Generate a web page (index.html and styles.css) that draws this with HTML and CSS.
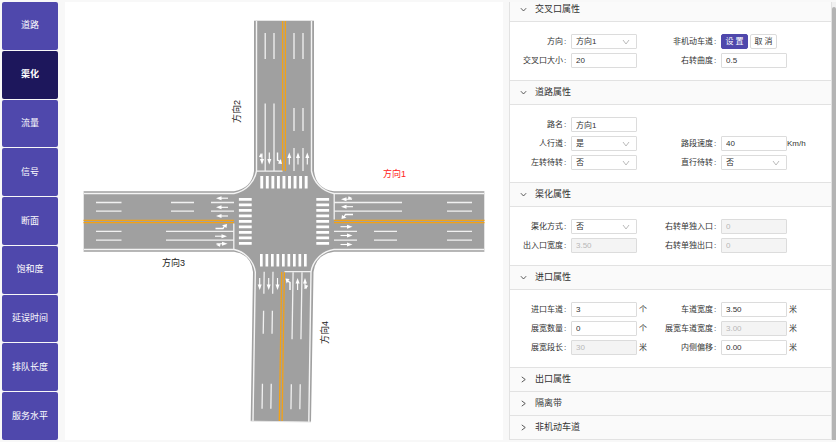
FILE: index.html
```html
<!DOCTYPE html>
<html lang="zh-CN">
<head>
<meta charset="utf-8">
<title>交叉口渠化</title>
<link rel="stylesheet" href="styles.css">
</head>
<body>
<nav class="nav">
  <button class="nav-item">道路</button>
  <button class="nav-item active">渠化</button>
  <button class="nav-item">流量</button>
  <button class="nav-item">信号</button>
  <button class="nav-item">断面</button>
  <button class="nav-item">饱和度</button>
  <button class="nav-item">延误时间</button>
  <button class="nav-item">排队长度</button>
  <button class="nav-item">服务水平</button>
</nav>

<main class="canvas">
<svg class="map" viewBox="65 2 438 438">
  <defs>
    <g id="ahead"><path d="M-6 0H2" stroke="#fff" stroke-width="1.1"/><path d="M6 0L0.5 -2V2Z" fill="#fff"/></g>
    <g id="turn"><path d="M-6 1.500H1.500L3 -1" fill="none" stroke="#fff" stroke-width="1.400"/><path d="M5.500 -3L0.500 -1.800L5 1Z" fill="#fff"/></g>
    <g id="fork"><path d="M-5 0H2M-4 0L-2 2.2" fill="none" stroke="#fff" stroke-width="1.1"/><path d="M6 0L0.5 -2V2Z" fill="#fff"/><path d="M-5.5 1L-1.5 3L-1 0Z" fill="#fff"/></g>
  </defs>

  <!-- asphalt -->
  <g fill="#a0a0a0">
    <path d="M254 20H314V171Q316 189 334 191.300H484.500V251.700H334Q316 254 313.500 272L311 422L250.700 421L253 272Q251 254 234 251.700H83.500V191.300H234Q252 188 254 171Z"/>
  </g>

  <!-- kerb lines -->
  <g fill="none" stroke="#f4f4f4" stroke-width="1.400">
    <path d="M256.500 20V171A28 28 0 0 1 234 193.500H83.500"/>
    <path d="M311.500 20V171A28 28 0 0 0 334 193.500H484.500"/>
    <path d="M83.500 249.500H234A27 27 0 0 1 255.300 272L253 421"/>
    <path d="M484.500 249.500H334A27 27 0 0 0 311 272L308.800 422"/>
  </g>
  <g fill="none" stroke="#e4e4e4" stroke-width="1">
    <path d="M254 20.500H314M83.500 191V252M484.500 191V252M250.700 421.200L311 422"/>
  </g>

  <!-- centre lines -->
  <g fill="none" stroke="#f3a216" stroke-width="1.300">
    <path d="M282.600 21V171M285.400 21V171"/>
    <path d="M83.500 220.400H234M83.500 222.700H234M334 220.400H484.500M334 222.700H484.500"/>
    <path d="M281.700 272L279.300 421M284.400 272L282.100 421"/>
  </g>

  <!-- lane lines -->
  <g fill="none" stroke="#f1f1f1" stroke-width="1.300">
    <path d="M265.200 33V59M274 33V59M294 33V59M303 33V59M265.200 103.500V171M274 103.500V171M294 108V131M303 108V131M294 148V171M303 148V171"/>
    <path d="M96 202.500H121.500M96 211.200H121.500M171 202.500H194M171 211.200H194M211 202.500H234M211 211.200H234M96 231.300H121.500M96 240.200H121.500M166 231.300H234M166 240.200H234"/>
    <path d="M334 202.500H402M334 211.200H402M447 202.500H472M447 211.200H472M334 231.300H357M334 240.200H357M374 231.300H397M374 240.200H397M447 231.300H472M447 240.200H472"/>
    <g transform="rotate(0.900 283 272)">
      <path d="M264.200 272V294M273 272V294M264.200 311V334M273 311V334M264.200 384V409M273 384V409M293.100 272V339M302 272V339M293.100 384V409M302 384V409"/>
    </g>
    <path d="M256.500 171.200H282.500M334.200 193.500V219.500M233.800 223.500V249.400M284.500 271.700H311"/>
  </g>

  <!-- crosswalks -->
  <g fill="none" stroke="#fff">
    <path d="M260.300 182.300H308" stroke-width="12.600" stroke-dasharray="2.900 2.650"/>
    <path d="M260 260.300H307.500" stroke-width="12.600" stroke-dasharray="2.700 2.800"/>
    <path d="M245.300 198V245" stroke-width="12.800" stroke-dasharray="2.700 2.800"/>
    <path d="M322.700 198V245" stroke-width="12.800" stroke-dasharray="2.700 2.800"/>
  </g>

  <!-- lane arrows -->
  <use href="#fork" transform="translate(262 158.500) rotate(90)"/>
  <use href="#ahead" transform="translate(269.300 158.500) rotate(90)"/>
  <use href="#turn" transform="translate(279 158.500) scale(-1 1) rotate(90) scale(1 -1)"/>
  <use href="#ahead" transform="translate(289.300 158.500) rotate(-90)"/>
  <use href="#ahead" transform="translate(298 158.500) rotate(-90)"/>
  <use href="#ahead" transform="translate(307.300 158.500) rotate(-90)"/>
  <use href="#ahead" transform="translate(222 198.200) rotate(180)"/>
  <use href="#ahead" transform="translate(222 207.300) rotate(180)"/>
  <use href="#ahead" transform="translate(222 216) rotate(180)"/>
  <use href="#turn" transform="translate(221.500 227)"/>
  <use href="#ahead" transform="translate(221 236.200)"/>
  <use href="#fork" transform="translate(221.500 243.700)"/>
  <use href="#fork" transform="translate(347 199.300) rotate(180)"/>
  <use href="#ahead" transform="translate(347 206.700) rotate(180)"/>
  <use href="#turn" transform="translate(347 216) rotate(180)"/>
  <use href="#ahead" transform="translate(346.500 226.700)"/>
  <use href="#ahead" transform="translate(346.500 235.500)"/>
  <use href="#ahead" transform="translate(346.500 244.500)"/>
  <use href="#ahead" transform="translate(259.700 284) rotate(90)"/>
  <use href="#ahead" transform="translate(268.700 284) rotate(90)"/>
  <use href="#ahead" transform="translate(277.500 284) rotate(90)"/>
  <use href="#turn" transform="translate(288.500 284) rotate(-90)"/>
  <use href="#ahead" transform="translate(297.600 284) rotate(-90)"/>
  <use href="#fork" transform="translate(305 284) rotate(-90)"/>

  <text class="road-name selected" x="383" y="177">方向1</text>
  <text class="road-name" transform="translate(240 123) rotate(-90)">方向2</text>
  <text class="road-name" x="162" y="266">方向3</text>
  <text class="road-name" transform="translate(328 344) rotate(-90)">方向4</text>
</svg>
</main>

<aside class="panel">
  <div class="sections">
    <section class="section">
      <h2><button class="head"><svg class="chev" viewBox="0 0 8 8"><path d="M1 2.500L4 5.700L7 2.500"/></svg>交叉口属性</button></h2>
      <div class="fields">
        <div class="field"><label for="dir">方向</label><span class="pick"><select id="dir"><option>方向1</option></select><svg viewBox="0 0 8 8"><path d="M1 2L4 6L7 2"/></svg></span></div>
        <div class="field"><span class="label">非机动车道</span><button class="btn primary">设 置</button><button class="btn">取 消</button></div>
        <div class="field"><label for="size">交叉口大小</label><input id="size" value="20"></div>
        <div class="field"><label for="curve">右转曲度</label><input id="curve" value="0.5"></div>
      </div>
    </section>
    <section class="section">
      <h2><button class="head"><svg class="chev" viewBox="0 0 8 8"><path d="M1 2.500L4 5.700L7 2.500"/></svg>道路属性</button></h2>
      <div class="fields">
        <div class="field wide"><label for="name">路名</label><input id="name" value="方向1"></div>
        <div class="field"><label for="walk">人行道</label><span class="pick"><select id="walk"><option>是</option></select><svg viewBox="0 0 8 8"><path d="M1 2L4 6L7 2"/></svg></span></div>
        <div class="field"><label for="speed">路段速度</label><input id="speed" value="40"><span>Km/h</span></div>
        <div class="field"><label for="lwait">左转待转</label><span class="pick"><select id="lwait"><option>否</option></select><svg viewBox="0 0 8 8"><path d="M1 2L4 6L7 2"/></svg></span></div>
        <div class="field"><label for="swait">直行待转</label><span class="pick"><select id="swait"><option>否</option></select><svg viewBox="0 0 8 8"><path d="M1 2L4 6L7 2"/></svg></span></div>
      </div>
    </section>
    <section class="section">
      <h2><button class="head"><svg class="chev" viewBox="0 0 8 8"><path d="M1 2.500L4 5.700L7 2.500"/></svg>渠化属性</button></h2>
      <div class="fields">
        <div class="field"><label for="mode">渠化方式</label><span class="pick"><select id="mode"><option>否</option></select><svg viewBox="0 0 8 8"><path d="M1 2L4 6L7 2"/></svg></span></div>
        <div class="field"><label for="rin">右转单独入口</label><input id="rin" value="0" disabled></div>
        <div class="field"><label for="gate">出入口宽度</label><input id="gate" value="3.50" disabled></div>
        <div class="field"><label for="rout">右转单独出口</label><input id="rout" value="0" disabled></div>
      </div>
    </section>
    <section class="section">
      <h2><button class="head"><svg class="chev" viewBox="0 0 8 8"><path d="M1 2.500L4 5.700L7 2.500"/></svg>进口属性</button></h2>
      <div class="fields">
        <div class="field"><label for="lanes">进口车道</label><input id="lanes" value="3"><span class="unit">个</span></div>
        <div class="field"><label for="lw">车道宽度</label><input id="lw" value="3.50"><span class="unit">米</span></div>
        <div class="field"><label for="wn">展宽数量</label><input id="wn" value="0"><span class="unit">个</span></div>
        <div class="field"><label for="ww">展宽车道宽度</label><input id="ww" value="3.00" disabled><span class="unit">米</span></div>
        <div class="field"><label for="wl">展宽段长</label><input id="wl" value="30" disabled><span class="unit">米</span></div>
        <div class="field"><label for="off">内侧偏移</label><input id="off" value="0.00"><span class="unit">米</span></div>
      </div>
    </section>
    <section class="section closed">
      <h2><button class="head"><svg class="chev" viewBox="0 0 8 8"><path d="M2 1L6 4L2 7"/></svg>出口属性</button></h2>
    </section>
    <section class="section closed">
      <h2><button class="head"><svg class="chev" viewBox="0 0 8 8"><path d="M2 1L6 4L2 7"/></svg>隔离带</button></h2>
    </section>
    <section class="section closed">
      <h2><button class="head"><svg class="chev" viewBox="0 0 8 8"><path d="M2 1L6 4L2 7"/></svg>非机动车道</button></h2>
    </section>
  </div>
  <div class="track"><div class="thumb"></div></div>
</aside>
</body>
</html>
```
FILE: styles.css
```css
* { box-sizing: border-box; }

body {
  margin: 0;
  height: 100vh;
  padding: 2px 0 2px 2px;
  display: flex;
  background: #f8f8f8;
  color: #333;
  font: 8px/12px "Liberation Sans", "Noto Sans CJK SC", sans-serif;
  overflow: hidden;
}

button, input, select {
  margin: 0;
  font: inherit;
  color: inherit;
}

.nav {
  width: 56px;
  margin-right: 7px;
  display: flex;
  flex-direction: column;
  gap: 1px;
}

.nav-item {
  flex: 1;
  padding: 0 0 1px;
  border: 0;
  border-radius: 2px;
  background: #4f48ac;
  color: #fff;
  font-size: 9px;
}

.nav-item.active {
  background: #1d175c;
  font-weight: bold;
}

.canvas {
  flex: 1;
  min-width: 0;
  margin-right: 6px;
  background: #fff;
}

.map {
  display: block;
  width: 100%;
  height: 100%;
}

.road-name {
  font-size: 9px;
  fill: #222;
}

.road-name.selected { fill: #ff2020; }

.panel {
  width: 327px;
  display: flex;
  overflow: hidden;
}

.sections {
  flex: 1;
  margin-top: -5px;
  border: 1px solid #e2e2e2;
  border-top: 0;
  background: #fff;
}

.section { border-top: 1px solid #e2e2e2; }

h2 {
  margin: 0;
  font-size: 9px;
  font-weight: normal;
}

.head {
  width: 100%;
  height: 24px;
  padding: 0 0 1px 10px;
  display: flex;
  align-items: center;
  gap: 8px;
  border: 0;
  border-bottom: 1px solid #e2e2e2;
  background: #fafafa;
  text-align: left;
}

.closed .head {
  height: 23px;
  border-bottom: 0;
}

.chev {
  width: 7px;
  height: 7px;
  fill: none;
  stroke: #444;
}

.fields {
  padding: 10px 0;
  display: grid;
  grid-template-columns: 150px 150px;
}

.field {
  height: 19px;
  display: flex;
  align-items: center;
  white-space: nowrap;
}

.field.wide { grid-column: 1 / -1; }

label, .label {
  width: 61px;
  padding-right: 4px;
  flex: none;
  display: flex;
  justify-content: flex-end;
}

label::after, .label::after {
  content: ":";
  width: 3px;
  padding-left: 1px;
}

input, select {
  width: 66px;
  height: 15px;
  padding: 0 4px;
  border: 1px solid #dcdcdc;
  border-radius: 1px;
  background: #fff;
}

select { appearance: none; }

input:disabled {
  background: #f4f4f4;
  color: #b8b8b8;
}

.pick {
  display: grid;
  align-items: center;
}

.pick > * { grid-area: 1 / 1; }

.pick svg {
  width: 8px;
  height: 8px;
  margin-right: 7px;
  justify-self: end;
  fill: none;
  stroke: #bbb;
  pointer-events: none;
}

.unit { padding-left: 2px; }

.btn {
  width: 27px;
  height: 15px;
  margin-right: 2px;
  padding: 0;
  border: 1px solid #dcdcdc;
  border-radius: 2px;
  background: #fff;
}

.btn.primary {
  border-color: #4f48ac;
  background: #4f48ac;
  color: #fff;
}

.track {
  width: 4px;
  padding-top: 5px;
  background: #f1f1f1;
}

.thumb {
  height: 100%;
  border-radius: 2px 2px 0 0;
  background: #b4b4b4;
}
```
